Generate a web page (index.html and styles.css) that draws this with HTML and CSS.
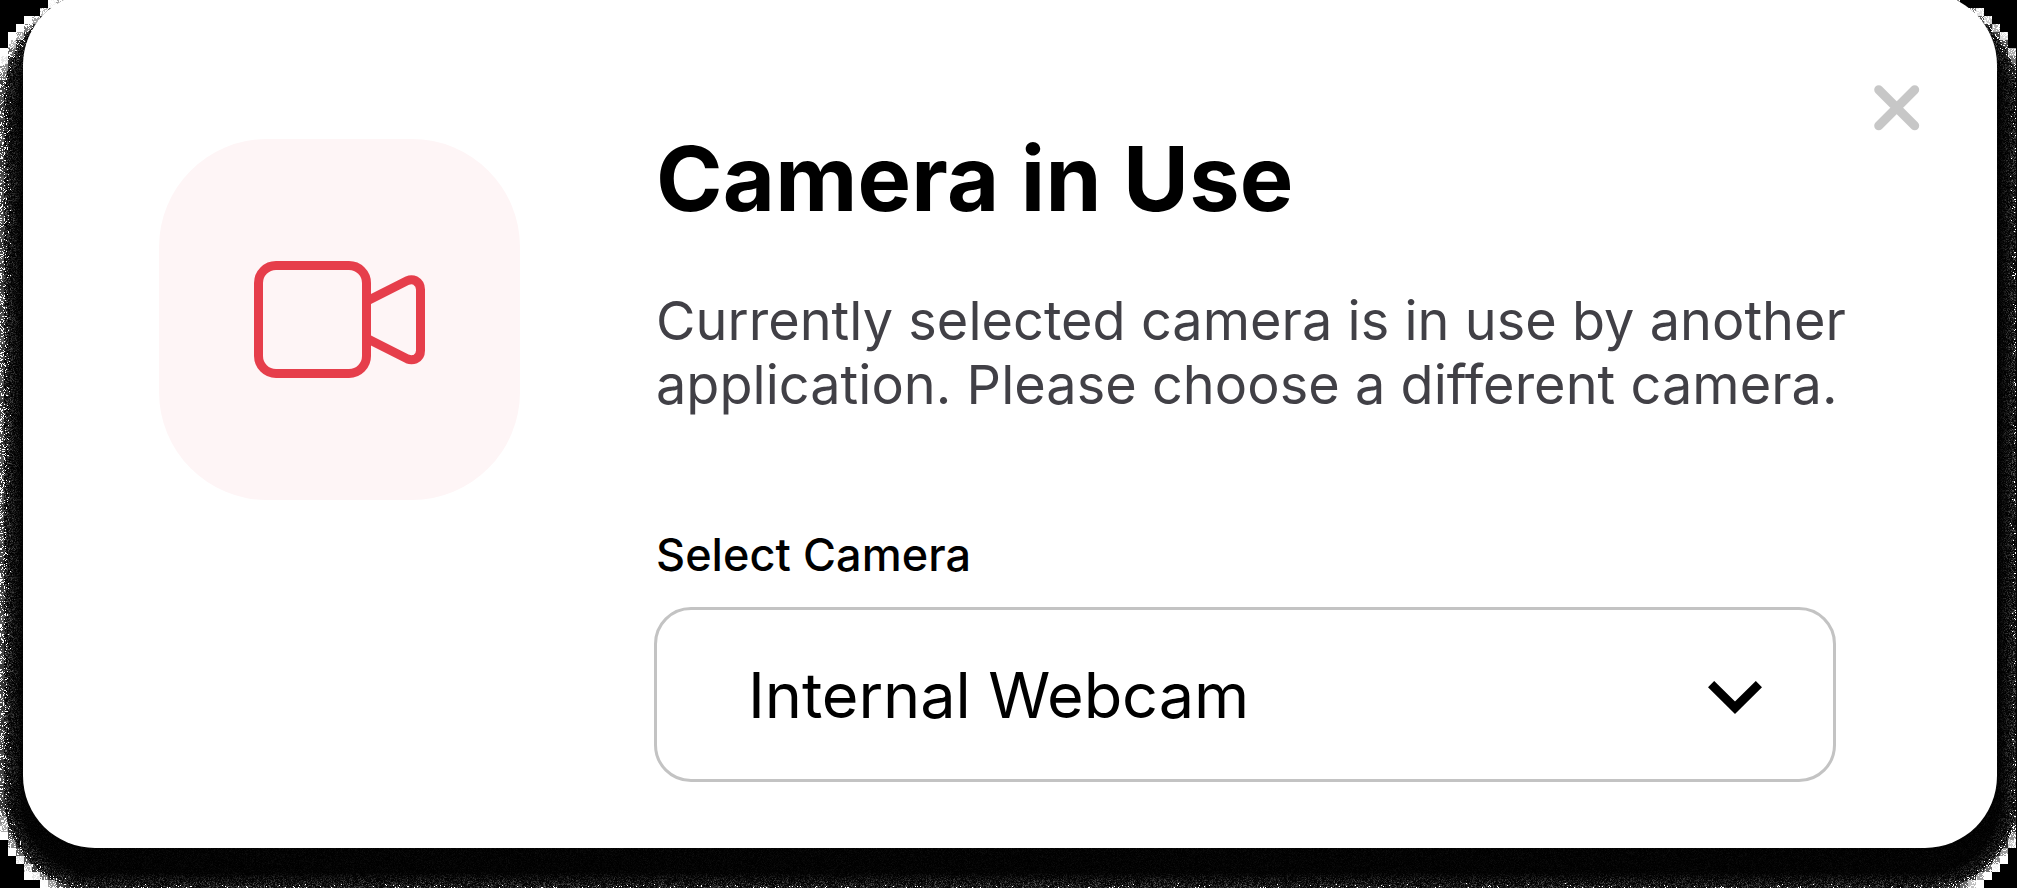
FILE: index.html
```html
<!DOCTYPE html>
<html lang="en">
<head>
<meta charset="utf-8">
<title>Camera in Use</title>
<link rel="stylesheet" href="styles.css">
</head>
<body>
<canvas class="shadow" width="2017" height="888"></canvas>
<main class="dialog">
  <div class="tile">
    <svg class="camera" viewBox="0 0 172 118" fill="none" stroke="#e63e4b" stroke-width="9">
      <rect x="4.500" y="4.500" width="108" height="108" rx="17.500"/>
      <path d="M115 39 L153.500 19.600 Q157.500 17.900 161.500 19.700 Q166.500 22.500 166.500 28.500 V89.500 Q166.500 95.500 161.500 98 Q157.500 99.600 153.500 98 L115 78.500"/>
    </svg>
  </div>
  <section class="content">
    <h1 class="title">Camera in Use</h1>
    <p class="message">Currently selected camera is in use by another<br>application. Please choose a different camera.</p>
    <div class="label">Select Camera</div>
    <div class="select">
      <span class="value">Internal Webcam</span>
      <svg class="chevron" viewBox="0 0 54 33" fill="none" stroke="#000" stroke-width="8.800"><path d="M3.100 3.100 L27 26.700 L50.900 3.100"/></svg>
    </div>
  </section>
  <svg class="close" viewBox="0 0 46 46" stroke="#c7c7c7" stroke-width="9" stroke-linecap="round"><path d="M4.700 4.700 L40.700 40.700 M40.700 4.700 L4.700 40.700"/></svg>
</main>
<script src="shadow.js"></script>
</body>
</html>
```
FILE: styles.css
```css
* { box-sizing: border-box; }
body {
  margin: 0;
  height: 888px;
  overflow: hidden;
  background: #000;
  font-family: Inter, "Liberation Sans", sans-serif;
}
.shadow { position: absolute; left: 0; top: 0; z-index: -1; }
.dialog {
  display: flex;
  align-items: flex-start;
  width: 1974px;
  height: 855px;
  margin: -7px 0 0 23px;
  padding: 146px 0 0 136px;
  border-radius: 72px;
  background: #fff;
}
.tile {
  display: flex;
  flex: none;
  width: 361px;
  height: 361px;
  padding: 122px 0 0 94.500px;
  border-radius: 108px;
  background: #fef5f6;
}
.camera { width: 172px; height: 118px; }
.content { flex: none; width: 1182px; margin-left: 134px; }
.title {
  margin: -15px 0 0 2px;
  font-size: 90px;
  line-height: 110px;
  font-weight: 700;
  letter-spacing: 0.180px;
  white-space: nowrap;
}
.message {
  margin: 55px 0 0 2px;
  color: #414046;
  font-size: 54px;
  line-height: 64px;
  letter-spacing: 0.040px;
  font-variant-ligatures: none;
  white-space: nowrap;
}
.label {
  margin: 110px 0 0 2px;
  font-size: 45px;
  line-height: 56px;
  font-weight: 500;
  letter-spacing: 0.060px;
}
.select {
  display: flex;
  align-items: center;
  justify-content: space-between;
  height: 175px;
  margin-top: 24px;
  padding: 1px 71px 0 91px;
  border: 3px solid #c3c3c3;
  border-radius: 37px;
}
.value { font-size: 63px; line-height: 76px; letter-spacing: -0.100px; white-space: nowrap; }
.chevron { width: 54px; height: 33px; margin-top: 5px; }
.close { flex: none; width: 46px; height: 46px; margin: -54px 0 0 38px; }
```
FILE: shadow.js
```js
// Draws the dithered shadow that surrounds the dialog, cut to 8px steps at the corners.
const canvas = document.querySelector('.shadow');
const W = canvas.width, H = canvas.height, STEP = 8;
const ctx = canvas.getContext('2d');
const img = ctx.createImageData(W, H);
let seed = 7;
function rnd() {
  seed = (seed * 1664525 + 1013904223) >>> 0;
  return seed / 4294967296;
}
const topLeft = [48, 40, 24, 16, 8, 8];
const topRight = [1960, 1984, 1992, 2000, 2008, 2008];
const bottomLeft = { 105: 8, 106: 8, 107: 16, 108: 24, 109: 24, 110: 40 };
const bottomRight = { 106: 2008, 107: 2008, 108: 2000, 109: 1992, 110: 1984 };
const R = 72, L = 24, RT = 1997, T = 22, B = 870;
function distance(x, y) {
  const dx = Math.max(L + R - x, 0, x - (RT - R));
  const dy = Math.max(T + R - y, 0, y - (B - R));
  return Math.hypot(dx, dy) - R;
}
for (let y = 0; y < H; y++) {
  const row = y >> 3;
  const left = topLeft[row] || bottomLeft[row] || 0;
  const right = topRight[row] || bottomRight[row] || 2016;
  for (let x = 0; x < W; x++) {
    let v = 0;
    if (x >= left && x < right) {
      const d = distance(x, y);
      const bx = (x >> 3) * STEP + 4, by = row * STEP + 4;
      const block = distance(bx, by);
      const p = Math.max(0, (d - 12) / 14);
      if (rnd() < p * p * 0.42) v = 255;
      else if (d > 20) v = Math.max(50, Math.min(255, (block - 18) * 24 + (row * 37 % 5) * 9));
      else v = rnd() * rnd() * Math.max(14, d * 7);
    }
    const i = (y * W + x) * 4;
    img.data[i] = img.data[i + 1] = img.data[i + 2] = v;
    img.data[i + 3] = 255;
  }
}
ctx.putImageData(img, 0, 0);
```
